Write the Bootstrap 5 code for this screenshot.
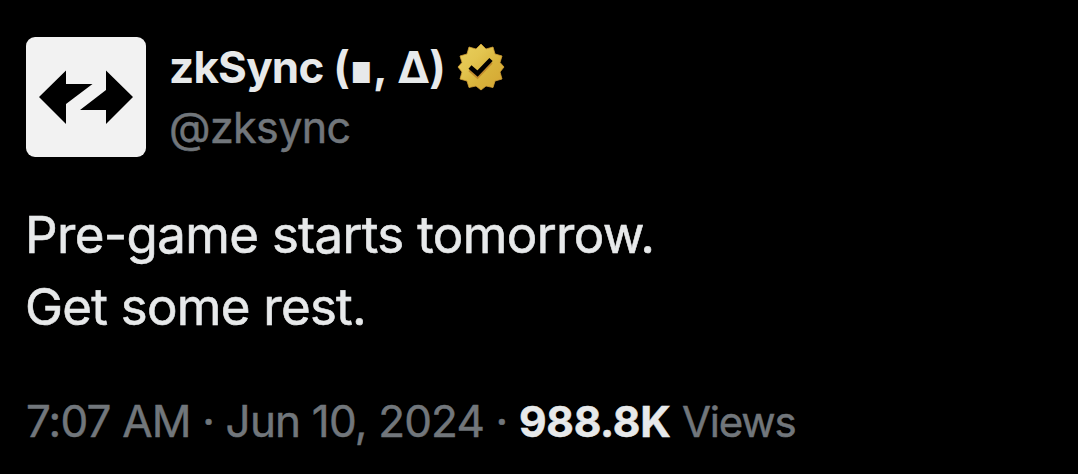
<!DOCTYPE html>
<html lang="en">
<head>
    <meta charset="UTF-8">
    <meta name="viewport" content="width=device-width, initial-scale=1.0">
    <title>zkSync on X</title>

    <link href="https://cdn.jsdelivr.net/npm/bootstrap@5.3.2/dist/css/bootstrap.min.css" rel="stylesheet">
    <script src="https://cdn.jsdelivr.net/npm/bootstrap@5.3.2/dist/js/bootstrap.bundle.min.js"></script>

    <style>
        body {
            background-color: #000;
            color: #e7e9ea;
            font-family: Inter, Roboto, "Liberation Sans", sans-serif;
            overflow: hidden;
        }

        .post {
            padding: 37px 26px 0;
            white-space: nowrap;
        }

        .avatar {
            width: 120px;
            height: 120px;
            border-radius: 9px;
            background-color: #f2f2f2;
        }

        .who {
            margin-left: 23px;
            line-height: 60px;
        }

        .display-name {
            font-size: 44px;
            font-weight: 700;
            letter-spacing: -0.8px;
        }

        .tombstone {
            font-family: "DejaVu Sans", sans-serif;
            font-size: 38px;
            line-height: 1;
            letter-spacing: 0;
        }

        .delta {
            margin-left: 2px;
        }

        .verified {
            width: 48px;
            height: 48px;
            margin-left: 12px;
        }

        .handle, .meta {
            color: #71767b;
        }

        .handle {
            font-size: 43px;
            letter-spacing: -0.6px;
            -webkit-text-stroke: 0.5px;
        }

        .post-text {
            margin-top: 42px;
            font-size: 51px;
            line-height: 72px;
            letter-spacing: -0.65px;
            -webkit-text-stroke: 0.6px;
        }

        .post-text > div {
            margin-left: -1px;
        }

        .line-short {
            letter-spacing: -0.75px;
        }

        .meta {
            margin-top: 48px;
            font-size: 44px;
            line-height: 60px;
            letter-spacing: -0.82px;
            -webkit-text-stroke: 0.5px;
        }

        .view-count {
            color: #e7e9ea;
            font-size: 42.500px;
            font-weight: 700;
            letter-spacing: -0.3px;
        }

        .view-label {
            font-size: 42px;
            letter-spacing: -1.2px;
        }
    </style>
</head>
<body>

    <article class="post">
        <div class="d-flex">
            <div class="avatar flex-shrink-0">
                <svg width="120" height="120" viewBox="0 0 120 120" fill="#000">
                    <path d="M13 60L40 33.500V47H66.500L40 67V87ZM107 60L80 33.500V53L54 73H80V87Z"/>
                </svg>
            </div>
            <div class="who">
                <div class="d-flex align-items-center">
                    <span class="display-name"><span>zkSync</span> (<span class="tombstone">∎</span>, <span class="delta">Δ</span>)</span>
                    <svg class="verified" viewBox="0 0 48 48">
                        <defs>
                            <linearGradient id="gold" x1="0" y1="0" x2="1" y2="1">
                                <stop offset="0" stop-color="#e8cf5c"/>
                                <stop offset=".35" stop-color="#e3c550"/>
                                <stop offset=".6" stop-color="#d9b43c"/>
                                <stop offset="1" stop-color="#d4a432"/>
                            </linearGradient>
                        </defs>
                        <path fill="url(#gold)" stroke="#d3a035" stroke-width=".8" stroke-linejoin="round" d="M24 1L29 6L36 4L38 11L45 13L43 19.500L47 24L43 29L45 36L38 38L36 44.500L29 43L24 47L19 43L12 44.500L10 38L3 36L5 29L1 24L5 19.500L3 13L10 11L12 4L19 6Z"/>
                        <path fill="none" stroke="#c38c2d" stroke-width="4.600" d="M13 26.500L20.500 33L34 19"/>
                        <path fill="none" stroke="#000" stroke-width="4.600" d="M13 24L20.500 30.500L34 16.500"/>
                    </svg>
                </div>
                <div class="handle">@zksync</div>
            </div>
        </div>

        <div class="post-text">
            <div><span>Pre-game starts tomorrow.</span></div>
            <div class="line-short"><span>Get some rest.</span></div>
        </div>

        <div class="meta">
            <span>7:07 AM · Jun 10, 2024 ·</span>
            <span class="view-count">988.8K</span>
            <span class="view-label">Views</span>
        </div>
    </article>

</body>
</html>
